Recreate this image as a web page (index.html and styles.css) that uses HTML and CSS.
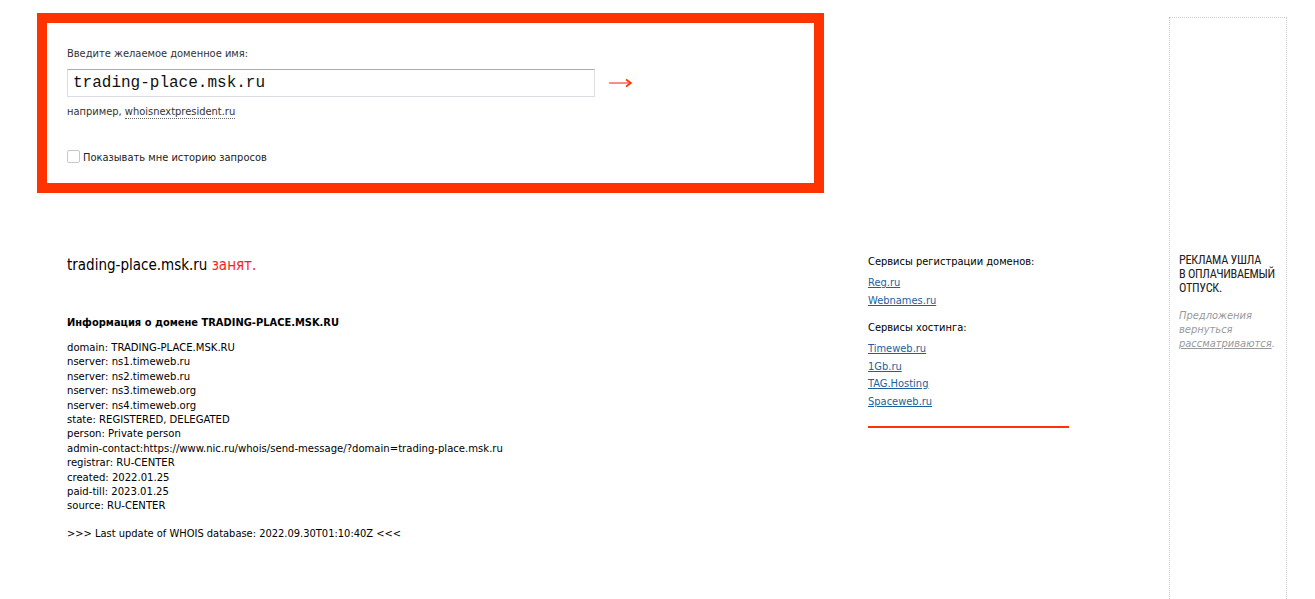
FILE: index.html
```html
<!DOCTYPE html>
<html lang="ru">
<head>
    <meta charset="UTF-8">
    <title>trading-place.msk.ru занят</title>
    <link rel="stylesheet" href="styles.css">
</head>
<body>
    <div class="page">
        <div class="main">
            <form class="search-box">
                <label class="search-label" for="domain">Введите желаемое доменное имя:</label>
                <div class="search-row">
                    <input class="search-input" id="domain" type="text" value="trading-place.msk.ru">
                    <button class="search-go" type="submit">
                        <svg width="24" height="10" viewBox="0 0 24 10">
                            <line x1="0" y1="5" x2="21" y2="5" stroke="#ff8a8a" stroke-width="2"/>
                            <path d="M17 1.5 L22 5 L17 8.5" fill="none" stroke="#ff3300" stroke-width="1.6"/>
                        </svg>
                    </button>
                </div>
                <p class="search-example">например, <a href="#">whoisnextpresident.ru</a></p>
                <label class="history"><input type="checkbox"> Показывать мне историю запросов</label>
            </form>

            <div class="result">
                <div class="whois">
                    <h1 class="status">trading-place.msk.ru <span class="busy">занят.</span></h1>
                    <h2 class="info-title">Информация о домене TRADING-PLACE.MSK.RU</h2>
                    <pre class="whois-data">domain: TRADING-PLACE.MSK.RU
nserver: ns1.timeweb.ru
nserver: ns2.timeweb.ru
nserver: ns3.timeweb.org
nserver: ns4.timeweb.org
state: REGISTERED, DELEGATED
person: Private person
admin-contact:https://www.nic.ru/whois/send-message/?domain=trading-place.msk.ru
registrar: RU-CENTER
created: 2022.01.25
paid-till: 2023.01.25
source: RU-CENTER</pre>
                    <p class="whois-update">&gt;&gt;&gt; Last update of WHOIS database: 2022.09.30T01:10:40Z &lt;&lt;&lt;</p>
                </div>

                <div class="services">
                    <h3 class="services-title">Сервисы регистрации доменов:</h3>
                    <ul class="services-list">
                        <li><a href="#">Reg.ru</a></li>
                        <li><a href="#">Webnames.ru</a></li>
                    </ul>
                    <h3 class="services-title">Сервисы хостинга:</h3>
                    <ul class="services-list">
                        <li><a href="#">Timeweb.ru</a></li>
                        <li><a href="#">1Gb.ru</a></li>
                        <li><a href="#">TAG.Hosting</a></li>
                        <li><a href="#">Spaceweb.ru</a></li>
                    </ul>
                </div>
            </div>
        </div>

        <div class="ad">
            <p class="ad-title">Реклама ушла<br>в оплачиваемый<br>отпуск.</p>
            <p class="ad-note">Предложения вернуться <a href="#">рассматриваются</a>.</p>
        </div>
    </div>
</body>
</html>
```

FILE: styles.css
```css
body {
    margin: 0;
    padding: 0;
    font-family: "DejaVu Sans Condensed", "DejaVu Sans", sans-serif;
    font-size: 11px;
    color: #000;
    background: #fff;
}

.page {
    display: flex;
    align-items: flex-start;
    min-height: 599px;
}

.main {
    width: 1069px;
    padding: 13px 0 0 37px;
    box-sizing: border-box;
    flex-shrink: 0;
}

.search-box {
    width: 787px;
    border: 10px solid #ff3300;
    height: 180px;
    box-sizing: border-box;
    padding: 24px 20px 0 20px;
    margin: 0;
}

.search-label {
    display: block;
    color: #333;
    line-height: 14px;
}

.search-row {
    display: flex;
    align-items: center;
    margin-top: 8px;
}

.search-input {
    width: 528px;
    height: 28px;
    box-sizing: border-box;
    border: 1px solid #dcdce4;
    border-top-color: #aaa;
    padding: 0 5px;
    font-family: "Liberation Mono", monospace;
    font-size: 16px;
    color: #111;
    outline: none;
    margin: 0;
}

.search-go {
    border: none;
    background: none;
    padding: 0;
    margin-left: 14px;
    width: 24px;
    height: 12px;
    cursor: pointer;
}

.search-go svg {
    display: block;
}

.search-example {
    margin: 8px 0 0 0;
    color: #333;
    line-height: 14px;
}

.search-example a {
    color: #333;
    text-decoration: none;
    border-bottom: 1px dotted #666;
}

.history {
    display: flex;
    align-items: center;
    margin-top: 32px;
    color: #222;
    line-height: 14px;
}

.history input {
    appearance: none;
    width: 13px;
    height: 13px;
    border: 1px solid #c8c8c8;
    border-radius: 2px;
    box-sizing: border-box;
    margin: -4px 3px 0 0;
    background: #fff;
}

.result {
    display: flex;
    align-items: flex-start;
    padding: 62px 0 0 30px;
}

.whois {
    width: 801px;
    flex-shrink: 0;
}

.status {
    font-size: 15px;
    font-weight: normal;
    margin: 0;
    line-height: 20px;
}

.busy {
    color: #ff1a1a;
}

.info-title {
    font-size: 11px;
    font-weight: bold;
    margin: 41px 0 0 0;
    line-height: 14px;
}

.whois-data {
    font-family: inherit;
    font-size: 11.2px;
    line-height: 14.4px;
    margin: 11px 0 0 0;
    white-space: pre;
}

.whois-update {
    margin: 13px 0 0 0;
    line-height: 14px;
}

.services {
    width: 201px;
    border-bottom: 2px solid #ff3300;
    padding-bottom: 16px;
}

.services-title {
    font-size: 11px;
    font-weight: normal;
    margin: 0;
    line-height: 14px;
}

.services-list {
    list-style: none;
    margin: 5px 0 12px 0;
    padding: 0;
}

.services-list:last-child {
    margin-bottom: 0;
}

.services-list li {
    line-height: 17.5px;
}

.services-list a {
    color: #1d5fa0;
}

.ad {
    margin: 17px 0 0 100px;
    width: 118px;
    height: 582px;
    box-sizing: border-box;
    border: 1px dotted #ccc;
    border-bottom: none;
    padding: 235px 8px 0 9px;
}

.ad-title {
    font-family: "Roboto", sans-serif;
    font-stretch: condensed;
    font-size: 12.3px;
    line-height: 14px;
    text-transform: uppercase;
    color: #222;
    margin: 0;
    letter-spacing: -0.3px;
}

.ad-note {
    font-style: italic;
    color: #999;
    font-size: 11px;
    line-height: 14px;
    margin: 14px 0 0 0;
}

.ad-note a {
    color: #999;
}
```
